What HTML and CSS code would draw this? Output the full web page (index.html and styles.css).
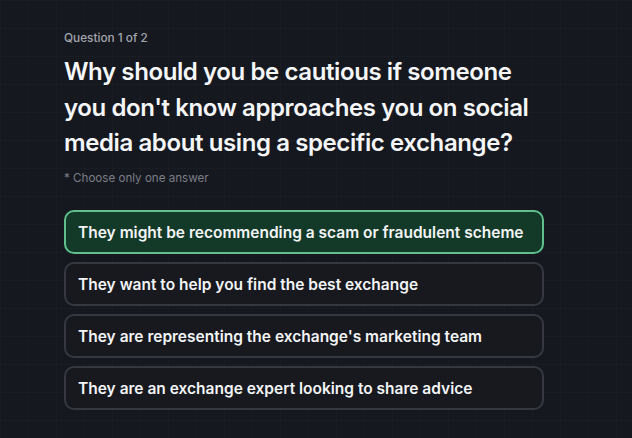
FILE: index.html
```html
<!DOCTYPE html>
<html lang="en">
<head>
<meta charset="utf-8">
<title>Quiz</title>
<link rel="stylesheet" href="styles.css">
</head>
<body>
<main class="quiz">
  <p class="counter">Question 1 of 2</p>
  <h1 class="question">Why should you be cautious if someone you don't know approaches you on social media about using a specific exchange?</h1>
  <p class="hint">* Choose only one answer</p>
  <div class="options">
    <button class="option selected">They might be recommending a scam or fraudulent scheme</button>
    <button class="option">They want to help you find the best exchange</button>
    <button class="option">They are representing the exchange's marketing team</button>
    <button class="option">They are an exchange expert looking to share advice</button>
  </div>
</main>
</body>
</html>
```
FILE: styles.css
```css
html, body {
  margin: 0;
  height: 100%;
}
body {
  background-color: #16181f;
  background-image:
    linear-gradient(rgba(255,255,255,0.015) 1px, transparent 1px),
    linear-gradient(90deg, rgba(255,255,255,0.015) 1px, transparent 1px);
  background-size: 28px 28px;
  font-family: Inter, "Noto Sans", sans-serif;
  color: #f3f4f6;
}
.quiz {
  padding: 30px 64px 0 64px;
  width: 480px;
}
.counter {
  margin: 0;
  font-size: 11.8px;
  line-height: 16px;
  color: #a3a6ae;
  font-weight: 500;
}
.question {
  margin: 8px 0 0 0;
  font-size: 24px;
  line-height: 35.5px;
  font-weight: 600;
  color: #f5f6f8;
  letter-spacing: -0.4px;
}
.hint {
  margin: 9px 0 0 0;
  font-size: 11.6px;
  line-height: 16px;
  color: #7b7e87;
}
.options {
  margin-top: 24px;
  display: flex;
  flex-direction: column;
  gap: 8px;
}
.option {
  display: block;
  width: 100%;
  height: 44px;
  box-sizing: border-box;
  text-align: left;
  padding: 2px 12px 0 12px;
  border: 2px solid #353841;
  border-radius: 10px;
  background: #17191f;
  color: #f3f4f6;
  font-family: inherit;
  font-size: 15.5px;
  font-weight: 600;
  cursor: pointer;
}
.option.selected {
  border-color: #5fc08e;
  background: #133a29;
}
```
